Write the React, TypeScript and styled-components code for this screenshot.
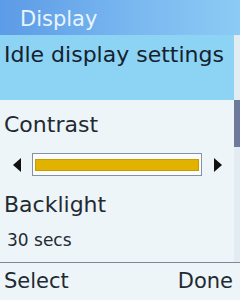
import React from "react";
import styled, { createGlobalStyle } from "styled-components";

const Global = createGlobalStyle`
  html, body { margin: 0; padding: 0; background: #eef5f8; }
  body { font-family: "DejaVu Sans", "Noto Sans", sans-serif; }
`;

const Screen = styled.div`
  width: 240px;
  height: 300px;
  display: flex;
  flex-direction: column;
  background: #eef5f8;
  overflow: hidden;
`;

const Header = styled.div`
  height: 35px;
  flex: none;
  box-sizing: border-box;
  padding: 9px 0 0 20px;
  background: linear-gradient(90deg, #5c9be6 0%, #79b7f0 55%, #8ccbf5 100%);
  color: #e8f5ff;
  font-size: 21px;
  line-height: 21px;
`;

const Body = styled.div`
  flex: 1;
  display: flex;
  min-height: 0;
`;

const Content = styled.div`
  flex: 1;
  display: flex;
  flex-direction: column;
`;

const Selected = styled.div`
  height: 65px;
  flex: none;
  box-sizing: border-box;
  background: #8dd3f3;
  color: #13222e;
  font-size: 22px;
  line-height: 26px;
  padding: 7px 0 0 4px;
  white-space: nowrap;
`;

const Label = styled.div<{ $top: number }>`
  font-size: 22px;
  line-height: 26px;
  color: #1f2a33;
  padding: ${(p) => p.$top}px 0 0 4px;
`;

const Value = styled.div`
  font-size: 17px;
  line-height: 22px;
  color: #1f2a33;
  padding: 11px 0 0 7px;
`;

const SliderRow = styled.div`
  display: flex;
  align-items: center;
  height: 23px;
  margin-top: 15px;
  padding-left: 13px;
`;

const Track = styled.div`
  width: 170px;
  height: 23px;
  margin: 0 12px 0 11px;
  box-sizing: border-box;
  border: 1px solid #8592a4;
  background: #fbfcfd;
  padding: 5px 2px 4px 2px;
  display: flex;
`;

const Fill = styled.div`
  background: #e2b200;
  border: 1px solid #c99c00;
  box-sizing: border-box;
  height: 100%;
`;

const ScrollTrack = styled.div`
  width: 6px;
  flex: none;
  background: #e3ecf2;
  display: flex;
  flex-direction: column;
`;

const Thumb = styled.div<{ $offset: number; $size: number }>`
  margin-top: ${(p) => p.$offset}px;
  height: ${(p) => p.$size}px;
  background: #6c7a9c;
`;

const Footer = styled.div`
  height: 38px;
  flex: none;
  box-sizing: border-box;
  border-top: 1px solid #7c8a98;
  display: flex;
  justify-content: space-between;
  align-items: flex-start;
  padding: 8px 7px 0 4px;
  font-size: 21px;
  line-height: 21px;
  color: #1f2a33;
`;

const Arrow = ({ dir }: { dir: "l" | "r" }) => (
  <svg width="8" height="14" viewBox="0 0 8 14">
    {dir === "l" ? (
      <polygon points="8,0 8,14 0,7" fill="#111" />
    ) : (
      <polygon points="0,0 0,14 8,7" fill="#111" />
    )}
  </svg>
);

export default function App() {
  const contrast = 100;
  return (
    <Screen>
      <Global />
      <Header>Display</Header>
      <Body>
        <Content>
          <Selected>Idle display settings</Selected>
          <Label $top={12}>Contrast</Label>
          <SliderRow>
            <Arrow dir="l" />
            <Track>
              <Fill style={{ width: `${contrast}%` }} />
            </Track>
            <Arrow dir="r" />
          </SliderRow>
          <Label $top={16}>Backlight</Label>
          <Value>30 secs</Value>
        </Content>
        <ScrollTrack>
          <Thumb $offset={65} $size={47} />
        </ScrollTrack>
      </Body>
      <Footer>
        <span>Select</span>
        <span>Done</span>
      </Footer>
    </Screen>
  );
}
